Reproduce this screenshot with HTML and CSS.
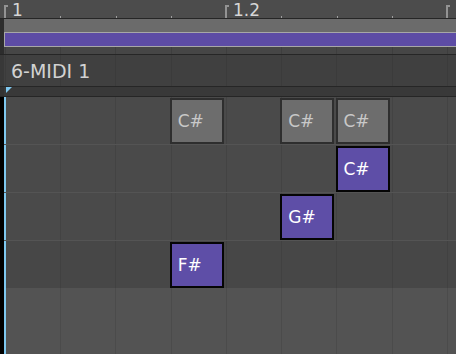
FILE: index.html
```html
<!DOCTYPE html>
<html>
<head>
<meta charset="utf-8">
<link rel="stylesheet" href="styles.css">
</head>
<body>
<div class="screen">
  <header class="ruler">
    <div class="rc"><i class="bracket"></i><span class="lbl">1</span></div>
    <div class="rc"><i class="tick"></i></div>
    <div class="rc"><i class="tick"></i></div>
    <div class="rc"><i class="tick"></i></div>
    <div class="rc"><i class="bracket"></i><span class="lbl">1.2</span></div>
    <div class="rc"><i class="tick"></i></div>
    <div class="rc"><i class="tick"></i></div>
    <div class="rc"><i class="tick"></i></div>
    <div class="rc"><i class="bracket"></i></div>
  </header>
  <section class="band">
    <div class="gut"></div>
    <div class="band-main">
      <div class="band-top"></div>
      <div class="clip"></div>
      <div class="band-bot cols"></div>
    </div>
  </section>
  <section class="title">
    <div class="gut"></div>
    <div class="title-main cols">6-MIDI 1</div>
  </section>
  <section class="strip">
    <div class="gut"></div>
    <div class="strip-main"><i class="loop-tri"></i></div>
  </section>
  <section class="editor">
    <div class="gut"></div>
    <div class="notes">
      <div class="lane cols r1"></div>
      <div class="lane cols r2"></div>
      <div class="lane cols r3"></div>
      <div class="lane cols r4"></div>
      <div class="lane cols floor"></div>
      <div class="note muted r1 c3">C#</div>
      <div class="note muted r1 c5">C#</div>
      <div class="note muted r1 c6">C#</div>
      <div class="note active r2 c6">C#</div>
      <div class="note active r3 c5">G#</div>
      <div class="note active r4 c3">F#</div>
    </div>
  </section>
</div>
</body>
</html>
```
FILE: styles.css
```css
html, body {
  margin: 0;
  padding: 0;
}
body {
  width: 456px;
  height: 354px;
  overflow: hidden;
  background: #4a4a4a;
  font-family: "DejaVu Sans", sans-serif;
}
.screen {
  width: 456px;
  height: 354px;
  display: flex;
  flex-direction: column;
}
i { display: block; }

/* ruler */
.ruler {
  height: 18px;
  flex: none;
  background: #4c4c4c;
  border-bottom: 1px solid #262626;
  display: grid;
  grid-template-columns: repeat(8, 55.25px) 1fr;
  grid-template-rows: 18px;
  padding-left: 5px;
}
.rc {
  display: flex;
  align-items: flex-end;
  min-width: 0;
}
.tick {
  width: 1px;
  height: 2px;
  background: #a0a0a0;
}
.bracket {
  flex: none;
  width: 4px;
  height: 13px;
  margin-left: -1px;
  box-sizing: border-box;
  border-left: 2px solid #939393;
  border-top: 2px solid #939393;
}
.lbl {
  align-self: flex-start;
  margin-left: 4px;
  font-size: 17px;
  line-height: 20px;
  color: #d6d6d6;
  white-space: nowrap;
}

.cols {
  background-image: repeating-linear-gradient(to right, var(--line) 0 1px, transparent 1px 55.25px);
  background-position: 1px 0;
  background-repeat: no-repeat;
}

/* clip band */
.band {
  display: flex;
  flex: none;
  border-bottom: 1px solid #262626;
}
.band .gut { width: 4px; background: #2d2d2d; }
.band-main { flex: 1; }
.band-top { height: 13px; background: #6b6b6b; }
.clip {
  height: 13px;
  background: #5d4ca5;
  border: 1px solid #a7a7a7;
  border-right: 0;
}
.band-bot {
  height: 7px;
  background-color: #464646;
  --line: #3e3e3e;
}

/* title */
.title {
  display: flex;
  flex: none;
  height: 31px;
  border-bottom: 1px solid #262626;
}
.title .gut { width: 4px; background: #383838; }
.title-main {
  flex: 1;
  background-color: #404040;
  --line: #3b3b3b;
  display: flex;
  align-items: center;
  padding-left: 7px;
  font-size: 19px;
  line-height: 20px;
  color: #d2d2d2;
}

/* strip */
.strip {
  display: flex;
  flex: none;
  height: 9px;
  border-bottom: 1px solid #262626;
}
.strip .gut { width: 4px; background: #333333; }
.strip-main { flex: 1; background: #393939; }
.loop-tri {
  width: 0;
  height: 0;
  margin-left: 2px;
  border-top: 6px solid #7ec8f0;
  border-right: 6px solid transparent;
}

/* editor */
.editor {
  display: flex;
  flex: 1;
  min-height: 0;
}
.editor .gut { width: 4px; background: #000; }
.notes {
  flex: 1;
  display: grid;
  grid-template-columns: 1px repeat(8, 55.25px) 1fr;
  grid-template-rows: 47px 48px 48px 48px 1fr;
}
.lane {
  grid-column: 1 / -1;
  background-color: #4a4a4a;
  --line: #434343;
  box-shadow: inset 2px 0 #7ec8f0;
}
.r1 { grid-row: 1; }
.r2 { grid-row: 2; }
.r3 { grid-row: 3; }
.r4 { grid-row: 4; }
.floor { grid-row: 5; }
.lane.r2, .lane.r3, .lane.r4 { border-top: 1px solid #545454; }
.lane.r4 { background-color: #474747; --line: #414141; }
.lane.floor { background-color: #535353; --line: #4b4b4b; }

.c3 { grid-column: 5; }
.c5 { grid-column: 7; }
.c6 { grid-column: 8; }

.note {
  align-self: end;
  justify-self: start;
  width: 54px;
  height: 46px;
  margin-left: -1px;
  box-sizing: border-box;
  border: 2px solid;
  display: flex;
  align-items: center;
  padding-left: 6px;
  font-size: 17px;
  line-height: 20px;
}
.note.muted {
  background: #6d6d6d;
  border-color: #2e2e2e;
  color: #c8c8c8;
}
.note.active {
  background: #5e4ea7;
  border-color: #050505;
  color: #ffffff;
}
```
